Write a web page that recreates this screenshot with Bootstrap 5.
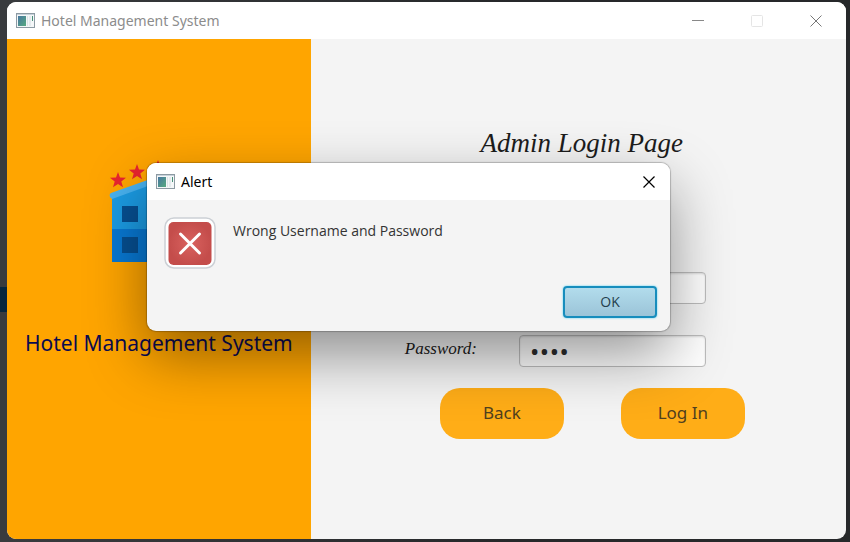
<!DOCTYPE html>
<html lang="en">
<head>
<meta charset="utf-8">
<meta name="viewport" content="width=device-width, initial-scale=1">
<title>Hotel Management System</title>
<link href="https://cdn.jsdelivr.net/npm/bootstrap@5.3.0/dist/css/bootstrap.min.css" rel="stylesheet">
<style>
  body { font-family: "Open Sans", "Noto Sans", sans-serif; color: #1c1c1c;
    background: linear-gradient(#07263d, #07263d) 0 287px / 7px 25px no-repeat, linear-gradient(90deg, #393b3e 0 7px, #26282a 60%); }
  .desktop { padding: 2px 4px 3px 7px; }
  .app-window { border-radius: 9px; background: #f4f4f4; }
  .title-bar { height: 37px; background: #fff; gap: 6px; padding-left: 9px; }
  .app-window > .title-bar { color: #8c8c8c; }
  .win-btn { width: 59px; height: 36px; border: 0; background: none; padding: 0 1px 0 0; display: flex; align-items: center; justify-content: center; }
  .title-text { font-family: "Noto Sans", sans-serif; font-size: 14px; line-height: 20px; }
  .brand-side { width: 36.2%; background: #ffa500; padding-top: 121px; }
  .brand-name { font-family: "Noto Sans", sans-serif; font-size: 21px; line-height: 30px; color: #0b0b50; margin-top: 66px; }
  .login-side { padding: 86px 7px 0 0; }
  .script-font { font-family: "Liberation Serif", serif; font-style: italic; }
  .login-heading { font-size: 27px; line-height: 36px; padding-left: 14px; margin-bottom: 111px; }
  .login-form { width: 340px; }
  .field-label { width: 114px; font-size: 17px; line-height: 24px; padding-bottom: 4px; }
  .field-input { width: 187px; height: 32px; padding: 0 10px; border: 1px solid #bdbdbd; border-radius: 4px; font-size: 15px; background: #fff; box-shadow: inset 0 1px 2px #ddd; color: #2d2d2d; }
  .field-input[type="password"] { font-size: 26px; }
  .field-gap { margin-bottom: 31px; }
  .action-row { gap: 57px; margin-top: 21px; }
  .action-btn { width: 124px; height: 51px; border: 0; border-radius: 20px; background: #ffad17; color: #50401f; font-family: "Noto Sans", sans-serif; font-size: 17px; padding: 0 0 2px; }
  .alert-window { left: 147px; top: 163px; width: 523px; background: #f4f4f4; border-radius: 9px;
    box-shadow: 0 0 1px 1px rgba(0,0,0,.22), 0 24px 60px rgba(0,0,0,.42); }
  .alert-window .title-bar { border-radius: 9px 9px 0 0; color: #000; }
  .alert-window .win-btn { width: 42px; }
  .alert-main { padding: 17px 17px 0; gap: 17px; }
  .alert-text { font-size: 14px; line-height: 20px; padding-top: 4px; color: #333; }
  .alert-foot { padding: 17px 13px 13px; }
  .ok-btn { width: 94px; height: 32px; border: 2px solid #168dbd; border-radius: 4px; background: linear-gradient(#b2dcec, #9bc4d8); box-shadow: 0 0 2px 0 #3fcdf4; font-size: 14px; color: #24404d; padding: 0 0 2px; }
</style>
<script src="https://cdn.jsdelivr.net/npm/bootstrap@5.3.0/dist/js/bootstrap.bundle.min.js"></script>
</head>
<body>
<svg width="0" height="0" class="position-absolute" aria-hidden="true">
  <defs>
    <linearGradient id="paneFill" x1="0" y1="0" x2="1" y2="1"><stop stop-color="#4776a0"/><stop offset="1" stop-color="#57aa80"/></linearGradient>
    <symbol id="appIcon" viewBox="0 0 19 15">
      <rect x=".5" y=".5" width="18" height="14" fill="#f4f7f8" stroke="#8d9aa3"/>
      <path d="M1 1.5h17" stroke="#c7d2da"/>
      <rect x="2" y="3" width="8" height="10" fill="url(#paneFill)"/>
      <path d="M11.5 3v10" stroke="#dce3e6"/><path d="M13 3h2v10h-2z" fill="#e4eaed"/><path d="M16.5 3v5" stroke="#479078"/>
    </symbol>
  </defs>
</svg>
<div class="desktop min-vh-100 d-flex">
  <div class="app-window flex-grow-1 d-flex flex-column overflow-hidden">
    <header class="title-bar d-flex align-items-center">
      <svg width="19" height="15" aria-hidden="true"><use href="#appIcon"/></svg>
      <span class="title-text me-auto">Hotel Management System</span>
      <div class="d-flex">
        <button class="win-btn" type="button" aria-label="Minimize"><svg width="12" height="12"><path d="M0 5.5h12" stroke="#888"/></svg></button>
        <button class="win-btn" type="button" aria-label="Maximize"><svg width="12" height="12"><rect x=".5" y=".5" width="11" height="11" rx="1" fill="none" stroke="#e5e5e5"/></svg></button>
        <button class="win-btn" type="button" aria-label="Close"><svg width="12" height="12"><path d="M.5 .5l11 11M11.5 .5l-11 11" stroke="#777"/></svg></button>
      </div>
    </header>
    <main class="d-flex flex-grow-1">
      <section class="brand-side flex-shrink-0 text-center">
        <svg width="100" height="102" viewBox="-1 0 100 102" role="img" aria-label="Hotel">
          <path d="M2 35L49 18l47 17v34H2z" fill="#1b9be3"/>
          <path d="M2 69h94v33H2z" fill="#0878d3"/>
          <path d="M0 37q-1-3 1-4L49 16l48 17q2 1 1 4l-2 2-47-17L2 39z" fill="#48b2f0"/>
          <path d="M12 46h16v16H12zM12 77h16v16H12zM70 46h16v16H70zM70 77h16v16H70zM41 46h16v16H41zM41 77h16v25H41z" fill="#064f91"/>
          <g fill="#e9242f">
            <path id="star" d="M8 12l2 5.400 6 .3-4.700 3.700 1.700 5.800L8 24l-5 3.200 1.700-5.800L0 17.700l6-.3z"/>
            <use href="#star" x="19" y="-8"/><use href="#star" x="40" y="-12"/><use href="#star" x="61" y="-8"/><use href="#star" x="80"/>
          </g>
        </svg>
        <div class="brand-name text-nowrap">Hotel Management System</div>
      </section>
      <section class="login-side flex-grow-1">
        <h1 class="login-heading script-font text-center fw-normal mt-0">Admin Login Page</h1>
        <form class="login-form mx-auto">
          <div class="d-flex align-items-center field-gap">
            <label class="field-label script-font" for="user">Username:</label>
            <input class="field-input" id="user" type="text">
          </div>
          <div class="d-flex align-items-center">
            <label class="field-label script-font" for="pass">Password:</label>
            <input class="field-input" id="pass" type="password" value="1234">
          </div>
          <div class="action-row d-flex justify-content-end">
            <button class="action-btn" type="button">Back</button>
            <button class="action-btn" type="button">Log In</button>
          </div>
        </form>
      </section>
    </main>
  </div>
</div>
<div class="alert-window position-absolute" role="alertdialog" aria-labelledby="alertTitle" aria-describedby="alertText">
  <div class="title-bar d-flex align-items-center">
    <svg width="19" height="15" aria-hidden="true"><use href="#appIcon"/></svg>
    <span class="title-text me-auto" id="alertTitle">Alert</span>
    <button class="win-btn" type="button" aria-label="Close"><svg width="12" height="12"><path d="M.5 .5l11 11M11.5 .5l-11 11" stroke="#000" stroke-width="1.200"/></svg></button>
  </div>
  <div class="alert-main d-flex">
    <svg width="52" height="52" viewBox="0 0 52 52" aria-hidden="true">
      <defs><radialGradient id="redFill"><stop stop-color="#d9625f"/><stop offset="1" stop-color="#c44d4b"/></radialGradient></defs>
      <rect x="1" y="1" width="50" height="50" rx="9" fill="#fff" stroke="#ccd0d5" stroke-width="1.500"/>
      <rect x="4.500" y="5" width="43" height="43" rx="5" fill="url(#redFill)"/>
      <path d="M16.500 17l19 19M35.500 17l-19 19" stroke="#fff" stroke-width="3" stroke-linecap="round"/>
    </svg>
    <div class="alert-text" id="alertText">Wrong Username and Password</div>
  </div>
  <div class="alert-foot d-flex justify-content-end"><button class="ok-btn" type="button">OK</button></div>
</div>
</body>
</html>
